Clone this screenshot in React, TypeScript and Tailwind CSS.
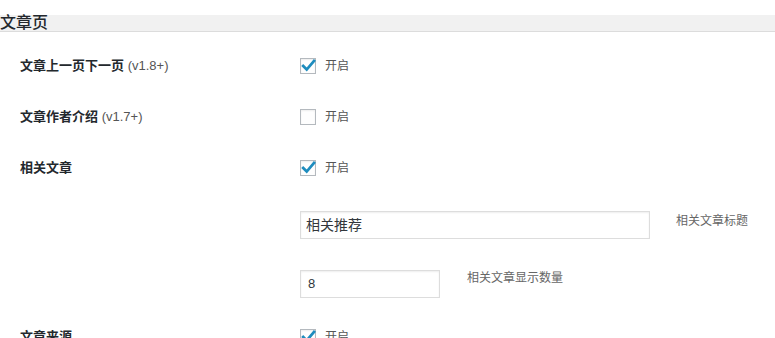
import React from "react";

const font = { fontFamily: '"Liberation Sans", "Noto Sans CJK SC", sans-serif' };

function Check({ checked }: { checked: boolean }) {
  return (
    <span className="relative inline-block w-[16px] h-[16px] border border-[#b4b9be] bg-[#fefefe] shadow-[inset_0_1px_2px_rgba(0,0,0,0.07)] shrink-0">
      {checked && (
        <svg viewBox="0 0 16 16" className="absolute left-[-1px] top-[-2px] w-[17px] h-[17px]">
          <path d="M3 8.5 L6.3 11.8 L13.2 3.6" stroke="#1e8cbe" strokeWidth="2.6" fill="none" strokeLinecap="square" />
        </svg>
      )}
    </span>
  );
}

function CheckRow({ label, ver, checked, h }: { label: string; ver?: string; checked: boolean; h: string }) {
  return (
    <div className={`flex items-center ${h}`}>
      <div className="w-[300px] pl-[20px] text-[13px] text-[#23282d]">
        <span className="font-bold">{label}</span>
        {ver && <span className="text-[#555]"> {ver}</span>}
      </div>
      <div className="flex items-center gap-[9px]">
        <Check checked={checked} />
        <span className="text-[12px] text-[#555]">开启</span>
      </div>
    </div>
  );
}

export default function App() {
  return (
    <div className="w-[775px] h-[338px] overflow-hidden bg-white" style={font}>
      <div className="h-[15px]" />
      <div className="h-[17px] bg-[#f1f1f1] border-b border-[#dcdcdc] flex items-end">
        <span className="text-[16px] leading-[16px] text-[#23282d] font-medium">文章页</span>
      </div>
      <div className="h-[17px]" />
      <CheckRow label="文章上一页下一页" ver="(v1.8+)" checked h="h-[34px]" />
      <div className="h-[17px]" />
      <CheckRow label="文章作者介绍" ver="(v1.7+)" checked={false} h="h-[34px]" />
      <div className="h-[17px]" />
      <CheckRow label="相关文章" checked h="h-[34px]" />
      <div className="h-[26px]" />
      <div className="flex items-start pl-[300px] h-[28px]">
        <div className="w-[350px] h-[28px] border border-[#ddd] shadow-[inset_0_1px_2px_rgba(0,0,0,0.07)] flex items-center px-[5px] text-[14px] text-[#32373c]">
          相关推荐
        </div>
        <span className="ml-[26px] mt-[1px] text-[12px] text-[#666]">相关文章标题</span>
      </div>
      <div className="h-[31px]" />
      <div className="flex items-start pl-[300px] h-[28px]">
        <div className="w-[140px] h-[28px] border border-[#ddd] shadow-[inset_0_1px_2px_rgba(0,0,0,0.07)] flex items-center px-[7px] text-[13px] text-[#32373c]">
          8
        </div>
        <span className="ml-[27px] mt-[-1px] text-[12px] text-[#666]">相关文章显示数量</span>
      </div>
      <div className="h-[22px]" />
      <CheckRow label="文章来源" checked h="h-[34px]" />
    </div>
  );
}
